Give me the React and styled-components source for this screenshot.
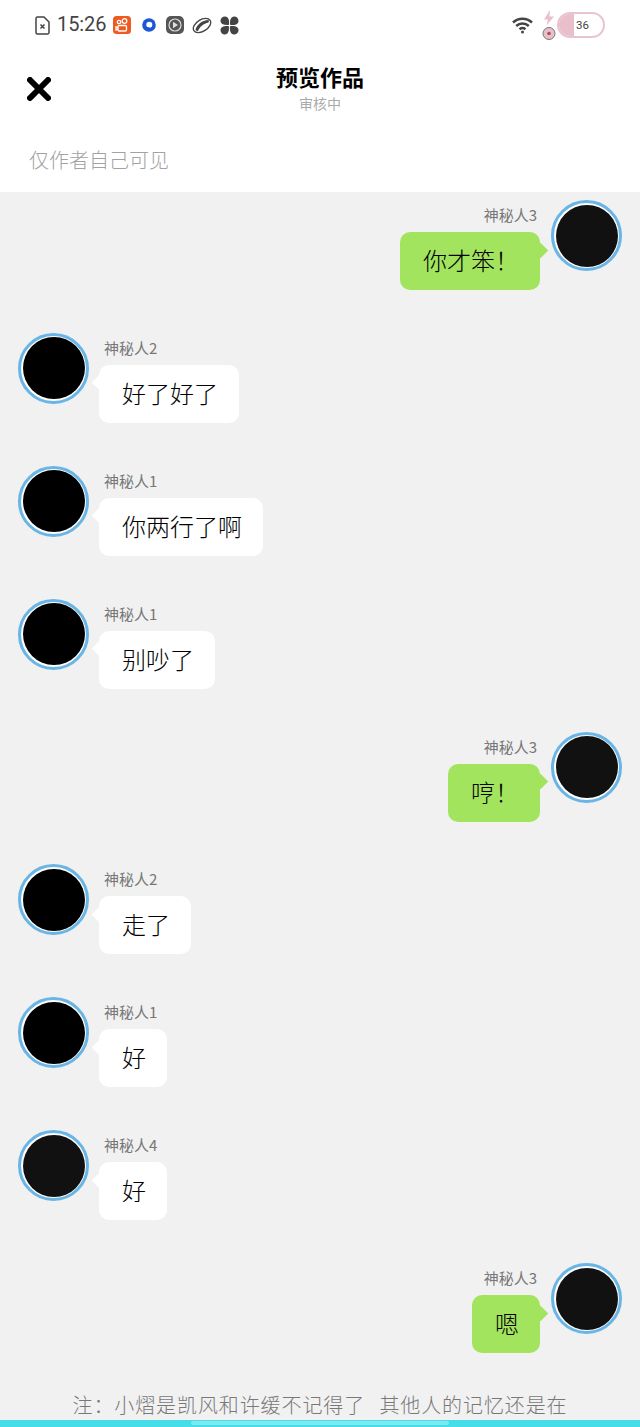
import React from 'react'
import styled, { createGlobalStyle } from 'styled-components'

const GlobalStyle = createGlobalStyle`
  html, body {
    margin: 0;
    padding: 0;
  }
  body {
    font-family: "Noto Sans CJK SC", "Noto Sans", sans-serif;
  }
`

const Page = styled.div`
  width: 640px;
  height: 1427px;
  overflow: hidden;
  display: flex;
  flex-direction: column;
  background: #f1f1f1;
`

const Top = styled.div`
  height: 192px;
  background: #fff;
  flex-shrink: 0;
`

const StatusBar = styled.div`
  height: 50px;
  display: flex;
  align-items: center;
  justify-content: space-between;
  padding: 0 35px;
  box-sizing: border-box;
`

const StatusGroup = styled.div`
  display: flex;
  align-items: center;
`

const Clock = styled.span`
  font-family: Roboto, sans-serif;
  font-size: 20px;
  line-height: 24px;
  color: #444;
  margin: -3px 7px 0 7px;
  letter-spacing: -0.1px;
`

const StatusIcon = styled.svg`
  display: block;
  flex-shrink: 0;
  margin-left: ${p => p.$gap || 0}px;
`

const Battery = styled.div`
  width: 48px;
  height: 26px;
  box-sizing: border-box;
  border: 2px solid #e8c4ce;
  border-radius: 13px;
  margin-left: 1px;
  overflow: hidden;
  display: flex;
  align-items: center;
`

const BatteryFill = styled.div`
  width: 15px;
  height: 100%;
  background: #e8bfcb;
`

const BatteryText = styled.span`
  font-family: Roboto, sans-serif;
  font-size: 11.5px;
  color: #444;
  margin-left: 2px;
`

const Header = styled.div`
  height: 72px;
  position: relative;
  display: flex;
  flex-direction: column;
  align-items: center;
`

const CloseButton = styled.svg`
  position: absolute;
  left: 27px;
  top: 27px;
`

const Title = styled.div`
  font-size: 22px;
  line-height: 28px;
  font-weight: 700;
  color: #000;
  margin-top: 12px;
`

const Subtitle = styled.div`
  font-size: 14px;
  line-height: 18px;
  color: #aaa;
  margin-top: 4px;
`

const Visibility = styled.div`
  font-size: 20px;
  line-height: 28px;
  color: #a2a2a2;
  padding: 24px 0 0 29px;
  font-weight: 300;
`

const Chat = styled.div`
  flex: 1;
  padding-top: 8px;
`

const Row = styled.div`
  height: 132.9px;
  box-sizing: border-box;
  padding: 0 18px;
  display: flex;
  flex-direction: ${p => (p.$mine ? 'row-reverse' : 'row')};
  align-items: flex-start;
`

const Avatar = styled.div`
  width: 71px;
  height: 71px;
  box-sizing: border-box;
  flex-shrink: 0;
  border-radius: 50%;
  border: 3.5px solid #68b5e6;
  padding: 1.5px;
  background: #fff;
  background-clip: padding-box;

  &::after {
    content: '';
    display: block;
    width: 100%;
    height: 100%;
    border-radius: 50%;
    background: ${p => p.$tone};
  }
`

const Body = styled.div`
  display: flex;
  flex-direction: column;
  align-items: ${p => (p.$mine ? 'flex-end' : 'flex-start')};
  margin: ${p => (p.$mine ? '0 11px 0 0' : '0 0 0 10px')};
`

const Name = styled.div`
  font-size: 15px;
  line-height: 20px;
  color: #777;
  height: 20px;
  margin: 5px 3px 7px 5px;
`

const Bubble = styled.div`
  position: relative;
  height: 58px;
  box-sizing: border-box;
  padding: 0 21px 3px 23px;
  display: flex;
  align-items: center;
  border-radius: 10px;
  font-size: 24px;
  font-weight: 300;
  color: #000;
  background: ${p => (p.$mine ? '#a3e45f' : '#fff')};

  &::before {
    content: '';
    position: absolute;
    top: 12.5px;
    width: 11px;
    height: 11px;
    transform: rotate(45deg);
    background: inherit;
    ${p => (p.$mine ? 'right: -5.5px;' : 'left: -5.5px;')}
  }
`

const Note = styled.div`
  height: 29px;
  margin-top: -6px;
  font-size: 20px;
  line-height: 28px;
  font-weight: 300;
  letter-spacing: 0.9px;
  word-spacing: 9px;
  color: #787878;
  text-align: center;
  white-space: nowrap;
  overflow: hidden;
`

const NavBar = styled.div`
  height: 7px;
  flex-shrink: 0;
  background: #45dde8;
  display: flex;
  justify-content: center;
  padding-top: 1px;
  box-sizing: border-box;
`

const NavHandle = styled.div`
  width: 258px;
  height: 4px;
  border-radius: 2px;
  background: #7ceaf1;
`

const messages = [
  { name: '神秘人3', text: '你才笨！', mine: true, tone: '#111' },
  { name: '神秘人2', text: '好了好了', tone: '#000' },
  { name: '神秘人1', text: '你两行了啊', tone: '#000' },
  { name: '神秘人1', text: '别吵了', tone: '#000' },
  { name: '神秘人3', text: '哼！', mine: true, tone: '#111' },
  { name: '神秘人2', text: '走了', tone: '#000' },
  { name: '神秘人1', text: '好', tone: '#000' },
  { name: '神秘人4', text: '好', tone: '#111' },
  { name: '神秘人3', text: '嗯', mine: true, tone: '#111' },
]

const App = () => {
  return (
    <Page>
      <GlobalStyle />
      <Top>
        <StatusBar>
          <StatusGroup>
            <StatusIcon width="15" height="19" viewBox="0 0 15 19" fill="none" stroke="#444" strokeWidth="1.5">
              <path d="M1 2.500a1.500 1.500 0 0 1 1.500-1.500H9l5 5v10.500a1.500 1.500 0 0 1-1.500 1.500h-10A1.500 1.500 0 0 1 1 16.500z" />
              <path d="M5.500 8.500l4 4M9.500 8.500l-4 4" />
            </StatusIcon>
            <Clock>15:26</Clock>
            <StatusIcon width="18" height="18" viewBox="0 0 18 18">
              <rect width="18" height="18" rx="3.500" fill="#ee5a1f" />
              <g fill="none" stroke="#fff" strokeWidth="1.300">
                <circle cx="11.500" cy="5" r="2.300" />
                <circle cx="6" cy="6" r="1.700" />
                <rect x="5" y="9.500" width="8.500" height="5.500" rx="1.200" />
                <path d="M5 11.500l-2-.8v3.300l2-.8" />
              </g>
            </StatusIcon>
            <StatusIcon $gap={11} width="14" height="14" viewBox="0 0 14 14">
              <circle cx="7" cy="7" r="6.800" fill="#1b56d6" />
              <circle cx="7.300" cy="6.800" r="3" fill="#fff" />
              <path d="M5 9l3 .5-3 1.300z" fill="#1b56d6" />
            </StatusIcon>
            <StatusIcon $gap={10} width="18" height="18" viewBox="0 0 18 18">
              <rect width="18" height="18" rx="5" fill="#555" />
              <circle cx="9" cy="9" r="6" fill="none" stroke="#ddd" strokeWidth="1.200" />
              <path d="M7 5.800l5 3.200-5 3.200z" fill="#ddd" />
            </StatusIcon>
            <StatusIcon $gap={8} width="20" height="17" viewBox="0 0 20 17">
              <ellipse cx="10" cy="8.500" rx="9.600" ry="5.800" transform="rotate(-32 10 8.500)" fill="#fff" stroke="#444" strokeWidth="1.300" />
              <path d="M3.500 12.500C5 7.500 10 3.300 16.500 3 17 4 17 5 16.500 5.500 11.500 6.500 7.500 10 6 14 5 14 4 13.500 3.500 12.500z" fill="#444" />
            </StatusIcon>
            <StatusIcon $gap={8} width="19" height="19" viewBox="0 0 19 19" fill="#444">
              <path d="M9 8.800C9.500 4.500 8.500.5 5 .5 2.500.5.500 2.300.500 4.800c0 3.400 3.700 4.700 8.500 4z" />
              <path d="M10.200 9C14.500 9.500 18.500 8.500 18.500 5c0-2.500-1.800-4.500-4.300-4.500-3.400 0-4.700 3.700-4 8.500z" />
              <path d="M10 10.200c-.5 4.300.5 8.300 4 8.300 2.500 0 4.500-1.800 4.500-4.300 0-3.400-3.700-4.700-8.500-4z" />
              <path d="M8.800 10C4.500 9.500.5 10.500.5 14c0 2.500 1.800 4.500 4.300 4.500 3.400 0 4.700-3.700 4-8.500z" />
            </StatusIcon>
          </StatusGroup>
          <StatusGroup>
            <StatusIcon width="21" height="18" viewBox="0 0 21 18" fill="none" stroke="#444" strokeWidth="2.500">
              <path d="M1 6.500c5.500-5 13.500-5 19 0" />
              <path d="M4.200 10c3.600-3.300 9-3.300 12.600 0" />
              <path d="M7.500 13.200c1.800-1.400 4.200-1.400 6 0" />
              <circle cx="10.500" cy="16" r="1.500" fill="#444" stroke="none" />
            </StatusIcon>
            <StatusIcon $gap={9} width="14" height="32" viewBox="0 0 14 32">
              <path d="M8 1L2 10.500h4L4.500 16.500 12 7.500H7.500z" fill="#e8bfcb" />
              <circle cx="7" cy="24.500" r="6" fill="#e8bfcb" stroke="#777" strokeWidth="1" />
              <circle cx="7" cy="24.500" r="1.800" fill="#a55" />
            </StatusIcon>
            <Battery>
              <BatteryFill />
              <BatteryText>36</BatteryText>
            </Battery>
          </StatusGroup>
        </StatusBar>
        <Header>
          <CloseButton width="24" height="24" viewBox="0 0 24 24" fill="none" stroke="#000" strokeWidth="6" strokeLinecap="round">
            <path d="M3 3l18 18M21 3L3 21" />
          </CloseButton>
          <Title>预览作品</Title>
          <Subtitle>审核中</Subtitle>
        </Header>
        <Visibility>仅作者自己可见</Visibility>
      </Top>
      <Chat>
        {messages.map((m, i) => (
          <Row key={i} $mine={m.mine}>
            <Avatar $tone={m.tone} />
            <Body $mine={m.mine}>
              <Name>{m.name}</Name>
              <Bubble $mine={m.mine}>{m.text}</Bubble>
            </Body>
          </Row>
        ))}
      </Chat>
      <Note>注：小熠是凯风和许缓不记得了 其他人的记忆还是在</Note>
      <NavBar>
        <NavHandle />
      </NavBar>
    </Page>
  )
}

export default App
